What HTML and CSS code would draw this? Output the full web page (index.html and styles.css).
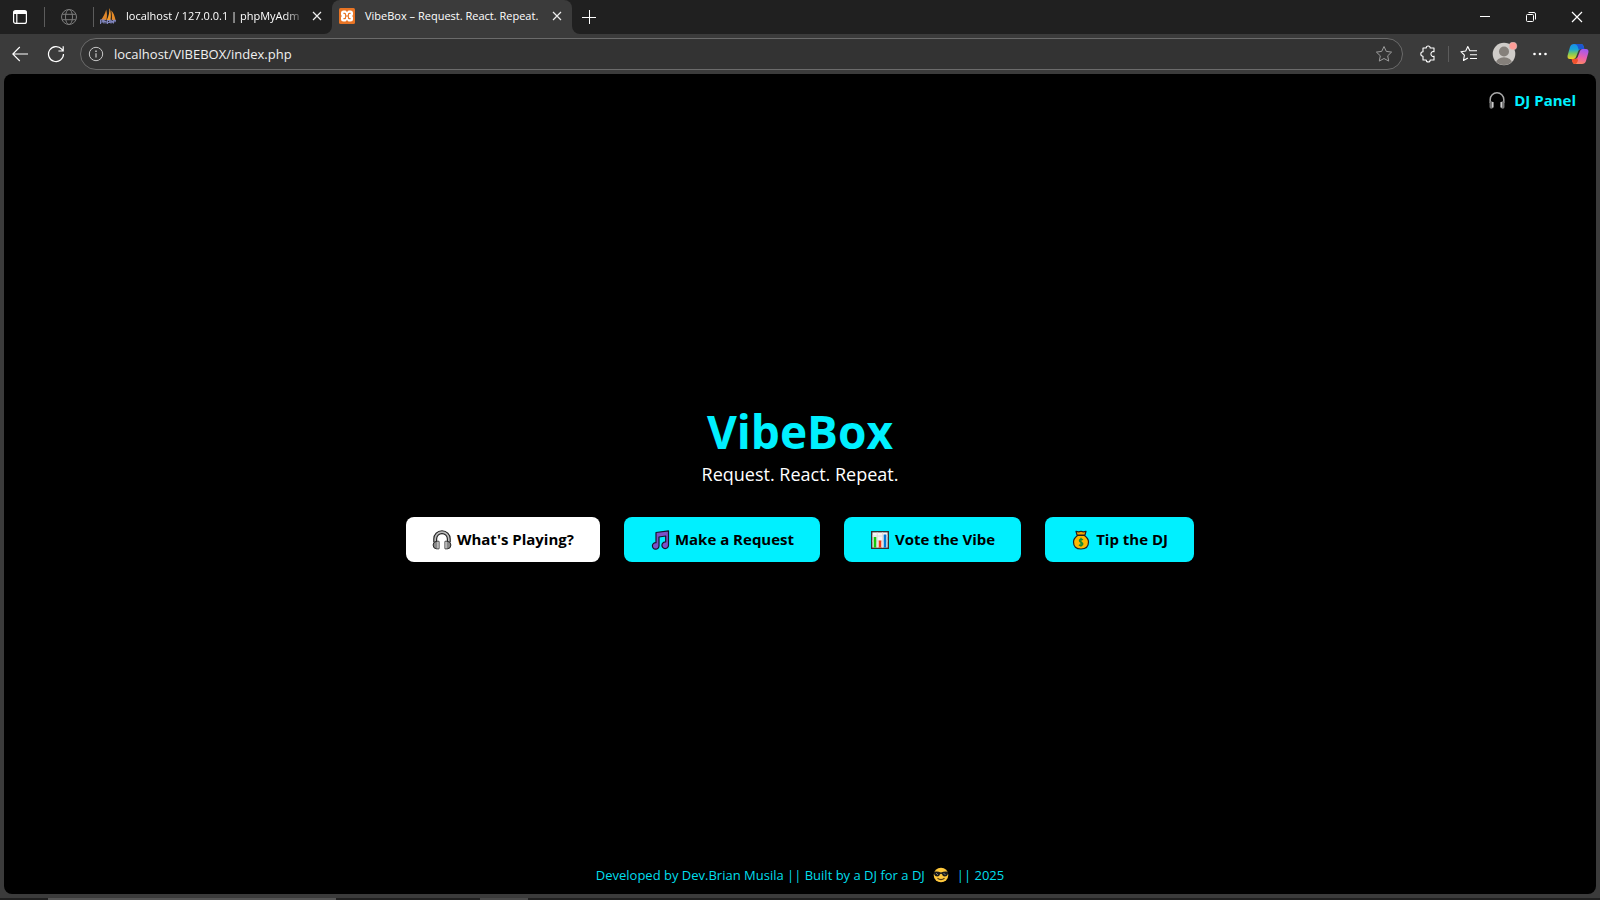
FILE: index.html
```html
<!DOCTYPE html>
<html lang="en">
<head>
<meta charset="utf-8">
<title>VibeBox – Request. React. Repeat.</title>
<link rel="stylesheet" href="styles.css">
</head>
<body>
<svg class="defs" aria-hidden="true">
  <defs>
    <linearGradient id="cpLeft" x1="0" y1="0" x2="0" y2="1"><stop offset="0" stop-color="#1b8fe8"/><stop offset=".35" stop-color="#18a5d8"/><stop offset=".65" stop-color="#7dc95a"/><stop offset="1" stop-color="#f5d020"/></linearGradient>
    <linearGradient id="cpRight" x1="0.6" y1="0" x2="0.3" y2="1"><stop offset="0" stop-color="#a259f0"/><stop offset=".5" stop-color="#e95fae"/><stop offset="1" stop-color="#ff8a5c"/></linearGradient>
  </defs>
</svg>

<header class="browser">
  <div class="tabstrip">
    <div class="strip-left">
      <button class="icon-btn workspace" aria-label="Tab actions">
        <svg width="16" height="16" viewBox="0 0 16 16" fill="none" stroke="#fff" stroke-width="1.2"><rect x="1.6" y="1.6" width="12.8" height="12.8" rx="2"/><path d="M1.6 3.4h12.8" stroke-width="3.2"/><path d="M4.8 4v10"/></svg>
      </button>
      <span class="sep"></span>
      <button class="icon-btn globe" aria-label="Pinned tab">
        <svg width="18" height="18" viewBox="0 0 18 18" fill="none" stroke="#7c7c7c" stroke-width="1"><circle cx="9" cy="9" r="7.5"/><ellipse cx="9" cy="9" rx="3.5" ry="7.5"/><path d="M2.2 6.3h13.6M2.2 11.7h13.6"/></svg>
      </button>
      <span class="sep sep-tab"></span>
      <div class="tab">
        <svg width="16" height="16" viewBox="0 0 16 16"><path d="M6.200 1.500C5.300 5 3.500 8.500 1 12h5.400c.8-3 .8-7-.2-10.500z" fill="#e0862a"/><path d="M9.300 0c1.700 3 1.900 8 1.200 12H6.800C8.800 8 9.700 4 9.300 0z" fill="#f89c2c"/><path d="M11.200 2.500c2.200 1.800 3.600 5.700 4.300 9.500h-3.700c.3-2.500.1-6-.6-9.500z" fill="#e58a26"/><path d="M.5 16v-4h2.300v2H.5M4 11v4.500M4 13.300h2v2.200M7.500 16v-3.500h2.200v2H7.500M11 15.500v-3l1.200 1.500 1.200-1.500v3M14.300 12l.7 1.500 1-1.500" fill="none" stroke="#8085bd" stroke-width="1.200"/></svg>
        <span class="tab-title faded">localhost / 127.0.0.1 | phpMyAdm</span>
        <button class="icon-btn close" aria-label="Close tab"><svg width="10" height="10" viewBox="0 0 10 10" stroke="#eee" stroke-width="1.2"><path d="M1 1l8 8M9 1L1 9"/></svg></button>
      </div>
    </div>
    <div class="tab tab-active">
      <svg width="16" height="16" viewBox="0 0 16 16"><rect width="16" height="16" rx="1.500" fill="#e87424"/><path d="M4.500 2.500h2L8 4l1.500-1.500h2q2.500 0 2.500 2.500v1.500L13.300 8l.7 1.500V11q0 2.500-2.500 2.500h-2L8 12l-1.500 1.500h-2Q2 13.500 2 11V9.500L2.700 8 2 6.500V5q0-2.500 2.500-2.500z" fill="#fff"/><path d="M4.400 5.300h1.300q.8 0 .8 1V7q0 1 1 1h1q1 0 1-1v-.7q0-1 .8-1h1.300M4.400 10.700h1.300q.8 0 .8-1V9q0-1 1-1h1q1 0 1 1v.7q0 1 .8 1h1.300" fill="none" stroke="#e87424" stroke-width="1.200"/></svg>
      <span class="tab-title">VibeBox – Request. React. Repeat.</span>
      <button class="icon-btn close" aria-label="Close tab"><svg width="10" height="10" viewBox="0 0 10 10" stroke="#eee" stroke-width="1.2"><path d="M1 1l8 8M9 1L1 9"/></svg></button>
    </div>
    <div class="strip-right">
      <button class="icon-btn newtab" aria-label="New tab"><svg width="14" height="14" viewBox="0 0 14 14" stroke="#fff" stroke-width="1"><path d="M7.500 0v14M0 7.500h14"/></svg></button>
      <div class="window-controls">
        <button class="icon-btn" aria-label="Minimize"><svg width="12" height="12" viewBox="0 0 12 12" stroke="#fff"><path d="M1 5.500h10"/></svg></button>
        <button class="icon-btn" aria-label="Restore"><svg width="12" height="12" viewBox="0 0 12 12" fill="none" stroke="#fff"><rect x="1.500" y="3.500" width="7" height="7" rx="1"/><path d="M3.500 1.500H9q1.500 0 1.500 1.500v5.500"/></svg></button>
        <button class="icon-btn" aria-label="Close"><svg width="12" height="12" viewBox="0 0 12 12" stroke="#fff" stroke-width="1.2"><path d="M1 1l10 10M11 1L1 11"/></svg></button>
      </div>
    </div>
  </div>

  <div class="toolbar">
    <button class="icon-btn" aria-label="Back"><svg width="16" height="16" viewBox="0 0 16 16" fill="none" stroke="#fff" stroke-width="1.1"><path d="M16 8H.8M7.800 1L.8 8l7 7"/></svg></button>
    <button class="icon-btn" aria-label="Refresh"><svg width="18" height="18" viewBox="0 0 18 18" fill="none" stroke="#fff" stroke-width="1.2"><path d="M16.500 9A7.500 7.500 0 1 1 14.700 4.200L16 6M16.200 1.200V6h-4.800"/></svg></button>
    <div class="address">
      <svg width="16" height="16" viewBox="0 0 16 16" fill="none" stroke="#c8c8c8"><circle cx="8" cy="8" r="6.700"/><path d="M8 7.200V11.500" stroke-width="1.200"/><path d="M8 4.400v1.500" stroke-width="1.500"/></svg>
      <input class="url" type="text" value="localhost/VIBEBOX/index.php" aria-label="Address">
      <button class="icon-btn" aria-label="Add to favorites"><svg width="18" height="18" viewBox="0 0 18 18" fill="none" stroke="#9c9c9c" stroke-linejoin="round"><path d="M9 1.500l2.300 4.900 5.300.7-3.900 3.700 1 5.300L9 13.500l-4.700 2.600 1-5.300L1.400 7.100l5.300-.7z"/></svg></button>
    </div>
    <div class="tools">
      <button class="icon-btn" aria-label="Extensions"><svg width="18" height="18" viewBox="0 0 18 18" fill="none" stroke="#fff" stroke-width="1.1" stroke-linejoin="round"><path d="M4 3h3.200a2 2 0 0 1 4 0H15v3.800a1.800 1.800 0 0 0-1.800 0q-1.300.8-1.300 2.200t1.300 2.200a1.800 1.800 0 0 0 1.800 0V15h-3.800a2 2 0 0 1-4 0H4v-3.800a2.200 2.200 0 0 1 0-4.400z"/></svg></button>
      <span class="tool-sep"></span>
      <button class="icon-btn" aria-label="Favorites"><svg width="18" height="18" viewBox="0 0 18 18" fill="none" stroke="#fff" stroke-width="1.1" stroke-linejoin="round"><path d="M11.500 5.800L9.700 5.600 7.800 1.500 5.700 6l-4.800.7L4.400 10.200l-.9 5.300L7.900 13M10 5.800h7M10 9.800h7M10 13.500h7"/></svg></button>
      <button class="icon-btn" aria-label="Profile"><svg width="26" height="24" viewBox="0 0 26 24"><defs><clipPath id="av"><circle cx="12" cy="12" r="11"/></clipPath></defs><circle cx="12" cy="12" r="11.300" fill="#cfccc9"/><g clip-path="url(#av)" fill="#85807b"><circle cx="12" cy="9.500" r="5"/><ellipse cx="12" cy="21" rx="8" ry="5.800"/></g><circle cx="21" cy="4" r="3.800" fill="#ff9d97" stroke="#d9c0bc" stroke-width=".6"/></svg></button>
      <button class="icon-btn" aria-label="Settings and more"><svg width="16" height="16" viewBox="0 0 16 16" fill="#fff"><circle cx="2.500" cy="8" r="1.300"/><circle cx="8" cy="8" r="1.300"/><circle cx="13.500" cy="8" r="1.300"/></svg></button>
      <button class="icon-btn copilot" aria-label="Copilot"><svg width="22" height="22" viewBox="0 0 22 22"><path d="M7 1h7q2 0 2.500 2l.8 3H14q-2 0-2.700 2L9 14q-.7 2-2.700 2H3q-3 0-2.400-3.500L3 4q.9-3 4-3z" fill="url(#cpLeft)"/><path d="M7 1h7q2 0 2.500 2l.8 3H14q-1.500 0-2.200 1L11 4.500Q10.200 1 7 1z" fill="#1d55d0"/><path d="M15 21H8q-2 0-2.500-2l-.8-3H8q2 0 2.700-2L13 8q.7-2 2.700-2H19q3 0 2.400 3.500L19 18q-.9 3-4 3z" fill="url(#cpRight)"/><path d="M4.700 16H8q1.500 0 2.200-1l.8 2.500q-.6 2.500-2.500 3.500Q6 21 5.500 19z" fill="#f0512d"/></svg></button>
    </div>
  </div>
</header>

<main class="page">
  <nav class="topnav">
    <a class="panel-link" href="#panel">
      <svg width="18" height="18" viewBox="0 0 18 18" fill="none"><path d="M2.200 12V8.500a6.800 6.800 0 0 1 13.600 0V12" stroke="#a9a9a9" stroke-width="1.500"/><path d="M3.300 12v4M14.700 12v4" stroke="#777" stroke-width="3.600" stroke-linecap="round"/><path d="M4.800 11v5.500M13.200 11v5.500" stroke="#d0d0d0" stroke-width="1.500"/></svg>
      DJ Panel
    </a>
  </nav>
  <section class="hero">
    <h1 class="title">VibeBox</h1>
    <p class="tagline">Request. React. Repeat.</p>
    <div class="actions">
      <a class="btn btn-white" href="#playing">
        <svg width="20" height="20" viewBox="0 0 20 20" fill="none"><path d="M3.200 12V9a6.800 6.800 0 0 1 13.600 0v3" stroke="#222" stroke-width="4"/><path d="M3.200 12V9a6.800 6.800 0 0 1 13.600 0v3" stroke="#bbb" stroke-width="1.700"/><path d="M4.800 11.300q-3.700 0-3.700 3.700t3.500 3.800H7v-7.500zM15.200 11.300q3.700 0 3.700 3.700t-3.500 3.800H13v-7.500z" fill="#888" stroke="#222"/><path d="M6 11.500v7M14 11.500v7" stroke="#ccc" stroke-width="1.400"/></svg>
        What's Playing?
      </a>
      <a class="btn" href="#request">
        <svg width="20" height="20" viewBox="0 0 20 20"><path d="M6 2.500L18.500.8v14.400a3.300 3.300 0 1 1-2.800-3.200V6L9 7v9a3.300 3.300 0 1 1-3-3.400z" fill="#7c50c8" stroke="#15152b" stroke-width="1.200" stroke-linejoin="round"/></svg>
        Make a Request
      </a>
      <a class="btn" href="#vote">
        <svg width="20" height="20" viewBox="0 0 20 20"><rect x="1.700" y="1.700" width="16.600" height="16.600" fill="#f5f5f5" stroke="#333" stroke-width="1.400"/><path d="M7.200 2.400v15M12.600 2.400v15M2.400 6h15.200M2.400 11h15.200" stroke="#ddd"/><path d="M5 7v10.600" stroke="#16c60c" stroke-width="2.600"/><path d="M10 10.500v7.100" stroke="#f03a17" stroke-width="2.600"/><path d="M15 4.500v13.100" stroke="#0078d7" stroke-width="2.600"/></svg>
        Vote the Vibe
      </a>
      <a class="btn" href="#tip">
        <svg width="20" height="20" viewBox="-1 0 20 20"><path d="M5.500 5.500h7Q16.500 8.500 16.500 12q0 7-7.500 7t-7.500-7q0-3.500 4-6.500z" fill="#fcb900" stroke="#222" stroke-width="1.200"/><path d="M4 1.300q2.500 1 5 0 2.500 1 5 0L13 5H5z" fill="#f7a600" stroke="#222" stroke-width="1.200" stroke-linejoin="round"/><path d="M11 9.800Q9 8.600 7.700 9.700 6.800 11.300 9 12.200q2.500 1 1.500 2.600Q9 16.300 6.900 14.900M9 7.700v9" fill="none" stroke="#118a34" stroke-width="1.300"/></svg>
        Tip the DJ
      </a>
    </div>
  </section>
  <footer class="credits">
    <span>Developed by Dev.Brian Musila || Built by a DJ for a DJ</span>
    <svg width="16" height="16" viewBox="0 0 16 16"><circle cx="8" cy="8" r="7.300" fill="#ffc83d"/><path d="M.8 4.800q3.600-1 7.200.7 3.600-1.700 7.200-.7l-.4 2.700q-.7 2-3 2T9 7.300L8 6.700l-1 .6Q6.500 9.500 4.200 9.500t-3-2z" fill="#1c1c1c"/><path d="M3 6l2 2M10.500 6l2 2" stroke="#999" stroke-width=".8"/><path d="M4.500 11.300q3.500 2.700 7 0" fill="none" stroke="#4a3512" stroke-width="1.100"/></svg>
    <span>|| 2025</span>
  </footer>
</main>
<div class="taskbar"><span class="task-window"></span><span class="task-item"></span></div>
</body>
</html>
```

FILE: styles.css
```css
* { box-sizing: border-box; }
body {
  margin: 0;
  height: 100vh;
  display: flex;
  flex-direction: column;
  overflow: hidden;
  background: #3b3b3b;
  color: #fff;
  font-family: "Open Sans", "Noto Sans", sans-serif;
}
svg { display: block; flex: none; }
.defs { position: absolute; width: 0; height: 0; }
.icon-btn {
  display: flex;
  align-items: center;
  justify-content: center;
  flex: none;
  padding: 0;
  border: 0;
  background: none;
}

/* Tabs */
.tabstrip {
  display: flex;
  height: 34px;
  background: linear-gradient(#202020 50%, #3b3b3b 50%);
}
.strip-left, .strip-right {
  display: flex;
  align-items: center;
  background: #202020;
}
.strip-left {
  width: 332px;
  padding-left: 12px;
  border-bottom-right-radius: 8px;
}
.strip-right {
  flex: 1;
  justify-content: space-between;
  padding-left: 10px;
  border-bottom-left-radius: 8px;
}
.sep { width: 1px; height: 20px; margin: 0 15px 0 16px; background: #5c5c5c; }
.sep-tab { margin: 0 6px 0 15px; }
.tab {
  display: flex;
  flex: 1;
  min-width: 0;
  align-items: center;
  padding-right: 10px;
  padding-bottom: 2px;
}
.tab-active {
  flex: none;
  width: 240px;
  padding-left: 7px;
  background: #3b3b3b;
  border-radius: 8px 8px 0 0;
}
.tab-title {
  flex: 1;
  min-width: 0;
  margin: 0 6px 0 10px;
  white-space: nowrap;
  font-size: 11px;
  line-height: 16px;
}
.faded { mask-image: linear-gradient(to right, #000 88%, transparent); }
.window-controls { display: flex; }
.window-controls .icon-btn { width: 46px; height: 32px; }

/* Toolbar */
.toolbar {
  display: flex;
  align-items: center;
  gap: 19px;
  height: 40px;
  padding: 0 11px 0 12px;
}
.address {
  display: flex;
  flex: 1;
  align-items: center;
  height: 32px;
  margin-left: -4px;
  padding: 0 9px 0 7px;
  border: 1px solid #6b6b6b;
  border-radius: 16px;
  background: #333;
}
.url {
  flex: 1;
  min-width: 0;
  padding: 0 10px;
  border: 0;
  outline: 0;
  background: none;
  color: #f0f0f0;
  font: 13px/20px "Open Sans", "Noto Sans", sans-serif;
}
.tools { display: flex; align-items: center; gap: 14px; margin-left: -3px; }
.tool-sep { width: 1px; height: 16px; margin: 0 -3px; background: #5c5c5c; }
.copilot { margin-left: 5px; }

/* Page */
.page {
  display: flex;
  flex: 1;
  flex-direction: column;
  margin: 0 4px;
  border-radius: 8px;
  background: #000;
}
.topnav { display: flex; justify-content: flex-end; padding: 14px 20px; }
.panel-link {
  display: flex;
  align-items: center;
  gap: 8px;
  color: #00f0ff;
  font-size: 15px;
  font-weight: 700;
  line-height: 24px;
  text-decoration: none;
}
.hero {
  display: flex;
  flex: 1;
  flex-direction: column;
  align-items: center;
  justify-content: center;
  padding-bottom: 26px;
}
.title {
  margin: 0;
  color: #00f0ff;
  font-size: 46px;
  font-weight: 700;
  line-height: 56px;
}
.tagline { margin: 0 0 28px; font-size: 18px; line-height: 30px; }
.actions { display: flex; gap: 24px; }
.btn {
  display: flex;
  align-items: center;
  gap: 5px;
  padding: 11px 26px;
  border-radius: 8px;
  background: #00f0ff;
  color: #000;
  font-size: 15px;
  font-weight: 700;
  line-height: 23px;
  text-decoration: none;
}
.btn-white { background: #fff; }
.credits {
  display: flex;
  align-items: center;
  justify-content: center;
  gap: 8px;
  padding-bottom: 9px;
  color: #00dfed;
  font-size: 13px;
  line-height: 20px;
}

/* Taskbar edge */
.taskbar { display: flex; height: 2px; margin-top: 4px; background: #202020; }
.task-window { width: 18%; margin-left: 3%; background: #555; }
.task-item { width: 3%; margin-left: 9%; background: #4a4a4a; }
```
